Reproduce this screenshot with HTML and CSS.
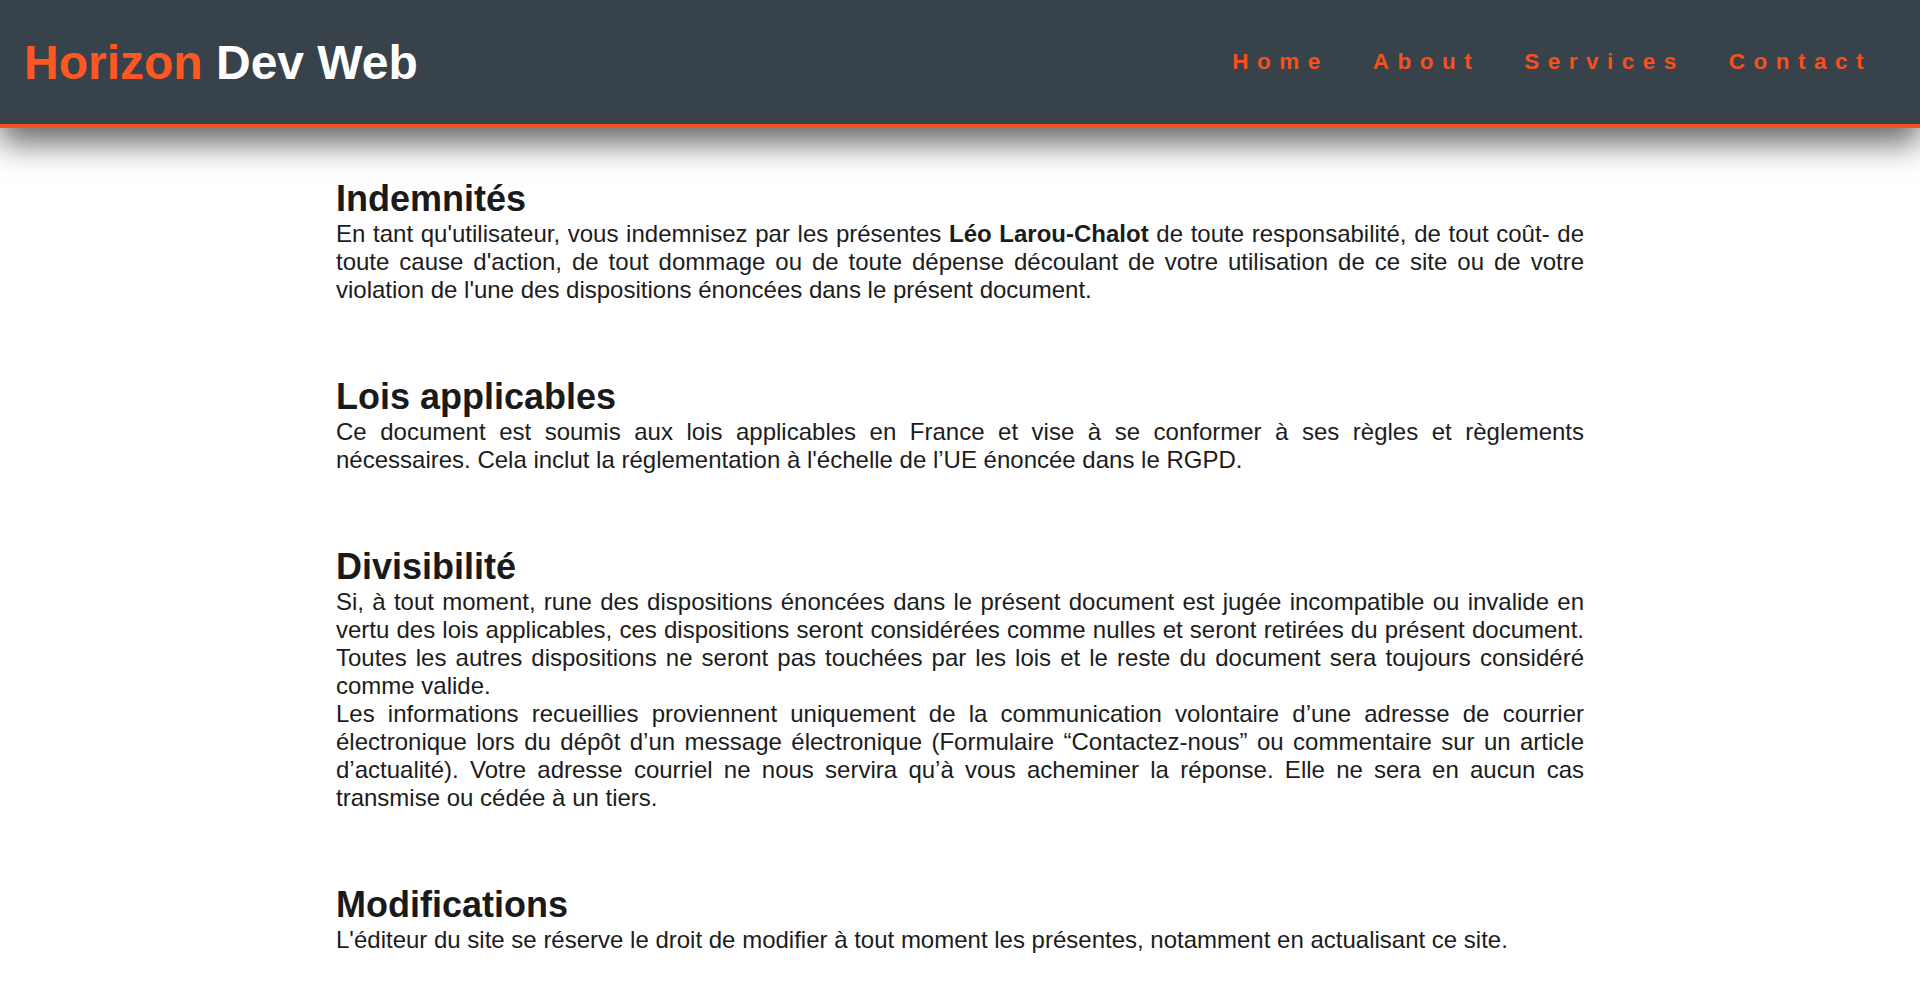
FILE: index.html
```html
<!DOCTYPE html>
<html lang="fr">
<head>
<meta charset="utf-8">
<title>Horizon Dev Web - Mentions légales</title>
<link rel="stylesheet" href="styles.css">
</head>
<body>
<header class="site-header">
  <div class="logo"><span class="logo-accent">Horizon</span> Dev Web</div>
  <nav class="main-nav">
    <a href="#" class="nav-link">Home</a>
    <a href="#" class="nav-link">About</a>
    <a href="#" class="nav-link">Services</a>
    <a href="#" class="nav-link">Contact</a>
  </nav>
</header>
<main class="content">
  <section class="legal-section">
    <h2 class="legal-title">Indemnités</h2>
    <p class="legal-text">En tant qu'utilisateur, vous indemnisez par les présentes <strong>Léo Larou-Chalot</strong> de toute responsabilité, de tout coût- de toute cause d'action, de tout dommage ou de toute dépense découlant de votre utilisation de ce site ou de votre violation de l'une des dispositions énoncées dans le présent document.</p>
  </section>
  <section class="legal-section">
    <h2 class="legal-title">Lois applicables</h2>
    <p class="legal-text">Ce document est soumis aux lois applicables en France et vise à se conformer à ses règles et règlements nécessaires. Cela inclut la réglementation à l'échelle de l’UE énoncée dans le RGPD.</p>
  </section>
  <section class="legal-section">
    <h2 class="legal-title">Divisibilité</h2>
    <p class="legal-text">Si, à tout moment, rune des dispositions énoncées dans le présent document est jugée incompatible ou invalide en vertu des lois applicables, ces dispositions seront considérées comme nulles et seront retirées du présent document. Toutes les autres dispositions ne seront pas touchées par les lois et le reste du document sera toujours considéré comme valide.<br>Les informations recueillies proviennent uniquement de la communication volontaire d’une adresse de courrier électronique lors du dépôt d’un message électronique (Formulaire “Contactez-nous” ou commentaire sur un article d’actualité). Votre adresse courriel ne nous servira qu’à vous acheminer la réponse. Elle ne sera en aucun cas transmise ou cédée à un tiers.</p>
  </section>
  <section class="legal-section">
    <h2 class="legal-title">Modifications</h2>
    <p class="legal-text">L'éditeur du site se réserve le droit de modifier à tout moment les présentes, notamment en actualisant ce site.</p>
  </section>
</main>
</body>
</html>
```

FILE: styles.css
```css
* {
  box-sizing: border-box;
}

html, body {
  margin: 0;
  padding: 0;
  background: #ffffff;
}

body {
  font-family: "Liberation Sans", Arial, Helvetica, sans-serif;
  color: #1c1c1c;
}

.site-header {
  height: 128px;
  background: #37424a;
  border-bottom: 4px solid #f4511e;
  display: flex;
  align-items: center;
  justify-content: space-between;
  padding: 0 48px 0 24px;
  box-shadow: 0 15px 30px rgba(0, 0, 0, 0.6);
}

.logo {
  font-size: 48px;
  font-weight: 700;
  color: #ffffff;
  white-space: nowrap;
}

.logo-accent {
  color: #ff5722;
}

.main-nav {
  display: flex;
  align-items: center;
  gap: 44px;
}

.nav-link {
  font-size: 22.5px;
  font-weight: 700;
  letter-spacing: 8.5px;
  color: #f4511e;
  text-decoration: none;
}

.content {
  width: 65%;
  margin: 50px auto 0;
}

.legal-section {
  margin-bottom: 72px;
}

.legal-title {
  font-size: 36px;
  line-height: normal;
  font-weight: 700;
  margin: 0;
  color: #1a1a1a;
}

.legal-text {
  font-size: 24px;
  line-height: 28px;
  margin: 0;
  text-align: justify;
}

.legal-text strong {
  font-weight: 700;
}
```
